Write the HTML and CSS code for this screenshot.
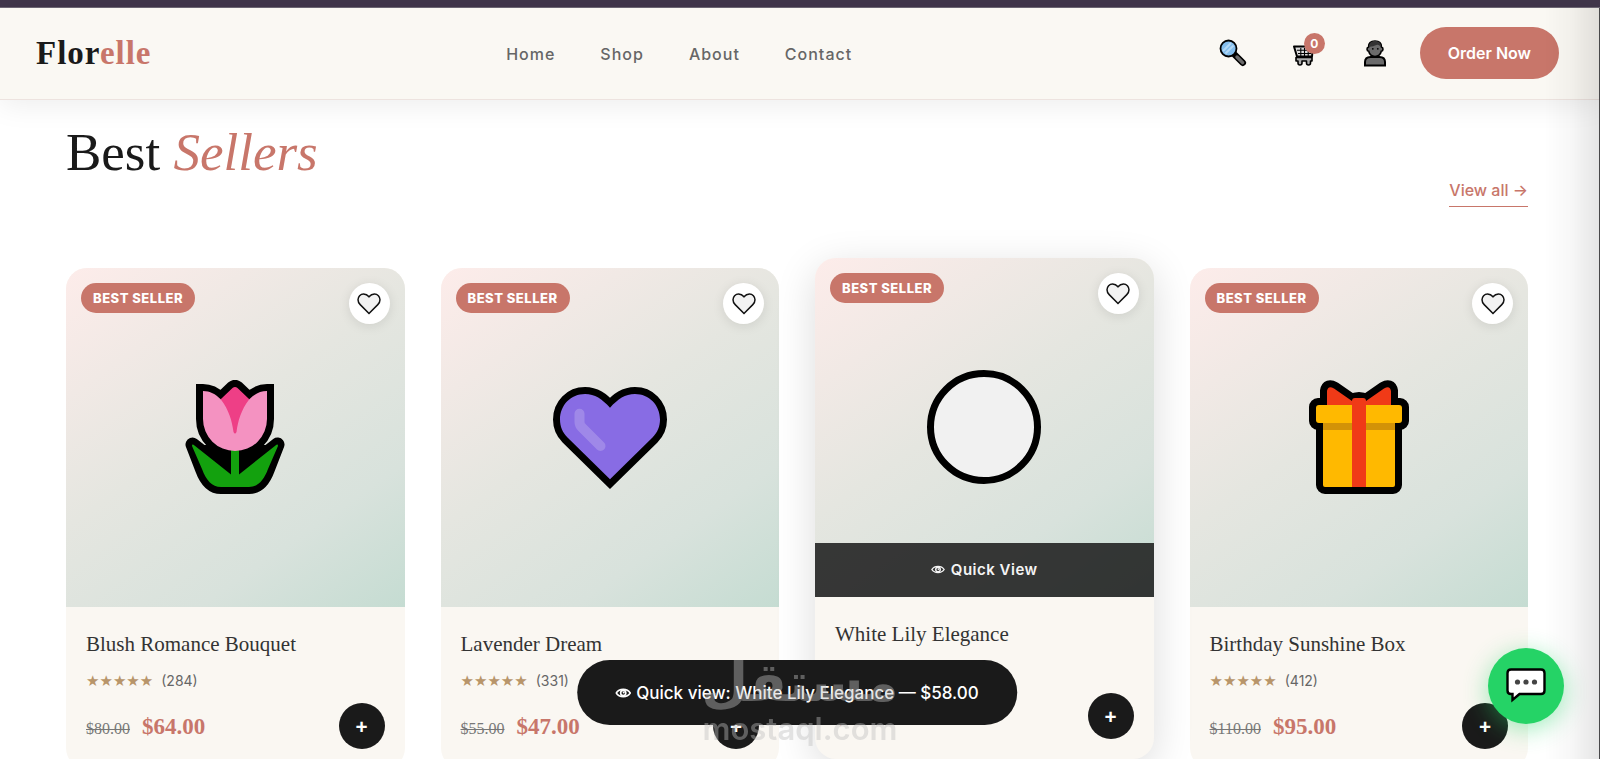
FILE: index.html
```
<!DOCTYPE html>
<html lang="en">
<head>
    <meta charset="UTF-8">
    <meta name="viewport" content="width=device-width, initial-scale=1.0">
    <title>Florelle</title>
    <link rel="stylesheet" href="styles.css">
</head>
<body>

<!-- shared icons -->
<svg class="sprite" aria-hidden="true">
    <symbol id="heart" viewBox="0 0 24 24">
        <path d="M12 21.500 L3.200 12.600 C1.600 11 1 9.500 1 7.800 C1 4.600 3.400 2 6.600 2 C9 2 10.500 3 12 4.800 C13.500 3 15 2 17.400 2 C20.600 2 23 4.600 23 7.800 C23 9.500 22.400 11 20.800 12.600 Z" fill="#f2f2f2" stroke="#111" stroke-width="1.500"/>
    </symbol>
    <symbol id="eye" viewBox="0 0 16 10">
        <path d="M1 5 C4 .2 12 .2 15 5 C12 9.800 4 9.800 1 5 Z" fill="none" stroke="currentColor" stroke-width="1.600"/>
        <circle cx="8" cy="5" r="2.600" fill="none" stroke="currentColor" stroke-width="1.600"/>
        <circle cx="8.500" cy="4.500" r="1" fill="currentColor"/>
    </symbol>
</svg>

<div class="topbar"></div>

<header class="header">
    <a class="logo" href="#">Flor<span>elle</span></a>
    <nav class="nav">
        <a href="#">Home</a>
        <a href="#">Shop</a>
        <a href="#">About</a>
        <a href="#">Contact</a>
    </nav>
    <div class="actions">
        <button class="icon-btn" type="button" aria-label="Search">
            <svg width="28" height="28" viewBox="0 0 28 28">
                <path d="M16 16 L23.800 23.800" stroke="#000" stroke-width="6.500" stroke-linecap="round"/>
                <path d="M18 18 L23.600 23.600" stroke="#6b6b6b" stroke-width="3.400" stroke-linecap="round"/>
                <circle cx="9.500" cy="9.500" r="8" fill="#83bdec" stroke="#000" stroke-width="1.800"/>
                <path d="M4 12 L12 4 M6.500 14.500 L14.500 6.500" stroke="#b3d8f5" stroke-width="2"/>
            </svg>
        </button>
        <button class="icon-btn cart" type="button" aria-label="Cart">
            <svg width="24" height="28" viewBox="0 0 24 28">
                <path d="M2 7.500 H21 L20 17.500 H5 Z" fill="#ddd" stroke="#000" stroke-width="2" stroke-linejoin="round"/>
                <path d="M5 11.200 H19.500 M6 14.500 H19 M8.800 9 V17 M12.500 9 V17 M16.200 9 V17" stroke="#000" stroke-width="1.100"/>
                <path d="M4 18.500 H20 V22 H18.500 V24 A2 2 0 0 1 14.500 24 V22 H10 V24 A2 2 0 0 1 6 24 V22 H4 Z" fill="#aaa" stroke="#000" stroke-width="1.600" stroke-linejoin="round"/>
            </svg>
            <span class="cart-count">0</span>
        </button>
        <button class="icon-btn" type="button" aria-label="Account">
            <svg width="24" height="28" viewBox="0 0 24 28">
                <path d="M2 26.500 V23 C2 19.500 4 18 7.500 18 H16.500 C20 18 22 19.500 22 23 V26.500 Z" fill="#6b6b6b" stroke="#000" stroke-width="2"/>
                <path d="M12 2 C16.500 2 18.500 4.500 18.500 8 C20.500 8.500 20.500 12 18.300 12.300 C17.500 15.500 15.500 17.500 12 17.500 C8.500 17.500 6.500 15.500 5.700 12.300 C3.500 12 3.500 8.500 5.500 8 C5.500 4.500 7.500 2 12 2 Z" fill="#6b6b6b" stroke="#000" stroke-width="1.600"/>
                <path d="M6 8.500 C6 4 8.500 2 12 2 C16 2 18 4 18 8.500 C16.500 5.500 14.500 5 12 6.500 C9.500 8 7 7 6 8.500 Z" fill="#333"/>
                <circle cx="9.800" cy="9.800" r=".9"/>
                <circle cx="14.800" cy="9.800" r=".9"/>
            </svg>
        </button>
        <button class="order-btn" type="button">Order Now</button>
    </div>
</header>

<main class="section">
    <div class="section-head">
        <h2>Best <em>Sellers</em></h2>
        <a class="view-all" href="#">View all →</a>
    </div>

    <div class="products">
        <article class="card">
            <div class="card-img">
                <span class="badge">BEST SELLER</span>
                <button class="wish" type="button" aria-label="Add to wishlist"><svg width="24" height="24"><use href="#heart"/></svg></button>
                <svg class="emoji" viewBox="0 0 114 114">
                    <path d="M14.500 64.500 L53 94.500 V71 H61 V94.500 L99.500 64.500 L90 89 C86 100 80 107 71 107 H43 C34 107 28 100 24 89 Z" fill="#000" stroke="#000" stroke-width="14" stroke-linejoin="round"/>
                    <path d="M25 65 H89 L61 95 H53 Z"/>
                    <path d="M25 11 C32 11 37.500 14 42.700 19.300 L54.500 8 Q57 6 59.500 8 L71.300 19.300 C76.500 14 82 11 89 11 V39 A32 32 0 0 1 25 39 Z" stroke="#000" stroke-width="14"/>
                    <path d="M14 66 Q14 63.500 16.500 65.500 L53 94.500 V70 H61 V94.500 L97.500 65.500 Q100 63.500 100 66 L90 89 C86 100 80 107 71 107 H43 C34 107 28 100 24 89 Z" fill="#13a10e"/>
                    <path d="M25 11 C32 11 37.500 14 42.700 19.300 L57 24 L71.300 19.300 C76.500 14 82 11 89 11 V39 A32 32 0 0 1 25 39 Z" fill="#f492c1"/>
                    <path d="M42.700 19.300 L54.500 8 Q57 6 59.500 8 L71.300 19.300 C63 30 60 41 58.500 52 Q57 55 55.500 52 C54 41 51 30 42.700 19.300 Z" fill="#ee3f86"/>
                </svg>
            </div>
            <div class="card-body">
                <h3>Blush Romance Bouquet</h3>
                <div class="rating"><span class="stars">★★★★★</span><span>(284)</span></div>
                <div class="card-foot">
                    <p class="price"><s>$80.00</s><strong>$64.00</strong></p>
                    <button class="add" type="button" aria-label="Add to cart">+</button>
                </div>
            </div>
        </article>

        <article class="card">
            <div class="card-img">
                <span class="badge">BEST SELLER</span>
                <button class="wish" type="button" aria-label="Add to wishlist"><svg width="24" height="24"><use href="#heart"/></svg></button>
                <svg class="emoji" viewBox="0 0 114 114">
                    <path d="M57 99.300 L14.500 57.500 C9.500 52.500 7 46.500 7 39.500 C7 25 18 14 32 14 C42 14 49 19 57 27.700 C65 19 72 14 82 14 C96 14 107 25 107 39.500 C107 46.500 104.500 52.500 99.500 57.500 Z" stroke="#000" stroke-width="14"/>
                    <path d="M57 99.300 L14.500 57.500 C9.500 52.500 7 46.500 7 39.500 C7 25 18 14 32 14 C42 14 49 19 57 27.700 C65 19 72 14 82 14 C96 14 107 25 107 39.500 C107 46.500 104.500 52.500 99.500 57.500 Z" fill="#886ce4"/>
                    <path d="M26.500 33.700 V42 Q26.500 45 29 47.500 L47.500 66" fill="none" stroke="#9f88e8" stroke-width="10" stroke-linecap="round"/>
                </svg>
            </div>
            <div class="card-body">
                <h3>Lavender Dream</h3>
                <div class="rating"><span class="stars">★★★★★</span><span>(331)</span></div>
                <div class="card-foot">
                    <p class="price"><s>$55.00</s><strong>$47.00</strong></p>
                    <button class="add" type="button" aria-label="Add to cart">+</button>
                </div>
            </div>
        </article>

        <article class="card active">
            <div class="card-img">
                <span class="badge">BEST SELLER</span>
                <button class="wish" type="button" aria-label="Add to wishlist"><svg width="24" height="24"><use href="#heart"/></svg></button>
                <svg class="emoji" viewBox="0 0 114 114">
                    <circle cx="57" cy="57" r="53.500" fill="#f1f1f1" stroke="#000" stroke-width="7"/>
                </svg>
                <button class="quick" type="button"><svg width="14" height="9"><use href="#eye"/></svg>Quick View</button>
            </div>
            <div class="card-body">
                <h3>White Lily Elegance</h3>
                <div class="rating"></div>
                <div class="card-foot">
                    <p class="price"><strong>$58.00</strong></p>
                    <button class="add" type="button" aria-label="Add to cart">+</button>
                </div>
            </div>
        </article>

        <article class="card">
            <div class="card-img">
                <span class="badge">BEST SELLER</span>
                <button class="wish" type="button" aria-label="Add to wishlist"><svg width="24" height="24"><use href="#heart"/></svg></button>
                <svg class="emoji" viewBox="0 0 114 114">
                    <g stroke="#000" stroke-width="14" stroke-linejoin="round">
                        <path d="M25 25 V11 Q26 5 32 8.500 L50 21 Q57 17 64 21 L82 8.500 Q88 5 89 11 V25 Z"/>
                        <rect x="14" y="25" width="86" height="18" rx="2"/>
                        <rect x="21" y="43" width="72" height="64" rx="2"/>
                    </g>
                    <path d="M25 25 V11 Q26 5 32 8.500 L50 21 V25 Z M89 25 V11 Q88 5 82 8.500 L64 21 V25 Z" fill="#f03a17"/>
                    <path d="M21 43 H93 V105 Q93 107 91 107 H23 Q21 107 21 105 Z" fill="#ffb900"/>
                    <path d="M21 43 H93 V50 H21 Z" fill="#d39207"/>
                    <rect x="14" y="25" width="86" height="18" rx="3" fill="#ffb900"/>
                    <path d="M50 107 V21 Q50 18 53 18 H61 Q64 18 64 21 V107 Z" fill="#f03a17"/>
                </svg>
            </div>
            <div class="card-body">
                <h3>Birthday Sunshine Box</h3>
                <div class="rating"><span class="stars">★★★★★</span><span>(412)</span></div>
                <div class="card-foot">
                    <p class="price"><s>$110.00</s><strong>$95.00</strong></p>
                    <button class="add" type="button" aria-label="Add to cart">+</button>
                </div>
            </div>
        </article>
    </div>
</main>

<div class="toast" role="status"><svg width="16" height="10"><use href="#eye"/></svg>Quick view: White Lily Elegance — $58.00</div>

<div class="watermark"><span lang="ar">مستقل</span><b>mostaql.com</b></div>

<button class="chat" type="button" aria-label="Chat">
    <svg width="40" height="36" viewBox="0 0 40 36">
        <path d="M5 1.500 H35 Q38.500 1.500 38.500 5 V22.500 Q38.500 26 35 26 H13.500 L6.500 32 V26 H5 Q1.500 26 1.500 22.500 V5 Q1.500 1.500 5 1.500 Z" fill="#fff" stroke="#000" stroke-width="2.400"/>
        <circle cx="11.500" cy="14" r="2.600" fill="#444"/>
        <circle cx="20" cy="14" r="2.600" fill="#444"/>
        <circle cx="28.500" cy="14" r="2.600" fill="#444"/>
    </svg>
</button>

<div class="edge"></div>

</body>
</html>
```
FILE: styles.css
```
* {
    box-sizing: border-box;
}

body {
    margin: 0;
    height: 100vh;
    overflow: hidden;
    background: #fff;
    color: #1a1a1a;
    font-family: Inter, "Open Sans", sans-serif;
}

button {
    border: none;
    padding: 0;
    font-family: inherit;
    cursor: pointer;
}

a {
    text-decoration: none;
}

.sprite {
    position: absolute;
    width: 0;
    height: 0;
}

.topbar {
    height: 8px;
    background: #41364b;
    border-bottom: 1px solid #6f6876;
}

/* header */
.header {
    position: relative;
    z-index: 10;
    display: flex;
    justify-content: space-between;
    align-items: center;
    padding: 19px 41px 20px 36px;
    background: #faf8f3;
    border-bottom: 1px solid #ede3df;
    box-shadow: 0 4px 30px rgba(0, 0, 0, 0.08);
}

.logo {
    font-family: "Liberation Serif", serif;
    font-size: 33px;
    line-height: 40px;
    font-weight: bold;
    letter-spacing: 1px;
    color: #1a1a1a;
}

.logo span {
    color: #c8766a;
}

.nav {
    display: flex;
    gap: 45px;
    padding-top: 2px;
}

.nav a {
    color: #666;
    font-size: 16px;
    font-weight: 500;
    letter-spacing: 1px;
}

.actions {
    display: flex;
    align-items: center;
    gap: 18px;
}

.icon-btn {
    position: relative;
    display: flex;
    justify-content: center;
    align-items: center;
    width: 53px;
    height: 48px;
    background: none;
}

.cart-count {
    position: absolute;
    top: 4px;
    right: 6px;
    width: 21px;
    height: 21px;
    border-radius: 50%;
    background: #c8766a;
    color: #fff;
    font-size: 12px;
    line-height: 21px;
    font-weight: 700;
}

.order-btn {
    height: 52px;
    padding: 0 28px;
    border-radius: 26px;
    background: #c8766a;
    color: #fff;
    font-size: 16px;
    font-weight: 600;
}

/* best sellers */
.section {
    padding: 15px 72px 0 66px;
}

.section-head {
    display: flex;
    justify-content: space-between;
    align-items: flex-end;
    margin-bottom: 61px;
}

.section-head h2 {
    margin: 0 0 17px;
    font-family: "Liberation Serif", serif;
    font-size: 53px;
    line-height: 75px;
    font-weight: normal;
}

.section-head em {
    color: #c8766a;
}

.view-all {
    padding-bottom: 5px;
    border-bottom: 1px solid #c8766a;
    color: #c8766a;
    font-size: 16px;
    line-height: 22px;
    font-weight: 500;
}

.products {
    display: grid;
    grid-template-columns: repeat(4, 1fr);
    gap: 36px;
}

.card {
    border-radius: 21px;
    overflow: hidden;
    background: #faf7f2;
}

.card.active {
    transform: translateY(-10px);
    box-shadow: 0 10px 42px rgba(0, 0, 0, 0.14);
}

.card-img {
    position: relative;
    display: flex;
    justify-content: center;
    align-items: center;
    aspect-ratio: 1;
    background: linear-gradient(145deg, #fdecea, #e5e6e0 45%, #d8e2dc 75%, #c5dcd2);
}

.emoji {
    width: 114px;
    height: 114px;
}

.badge {
    position: absolute;
    top: 15px;
    left: 15px;
    padding: 0 12px;
    border-radius: 15px;
    background: #c8766a;
    color: #fff;
    font-size: 13px;
    line-height: 30px;
    font-weight: 800;
    letter-spacing: 0.5px;
}

.wish {
    position: absolute;
    top: 15px;
    right: 15px;
    display: flex;
    justify-content: center;
    align-items: center;
    width: 41px;
    height: 41px;
    border-radius: 50%;
    background: #fff;
    box-shadow: 0 2px 12px rgba(0, 0, 0, 0.1);
}

.quick {
    position: absolute;
    left: 0;
    right: 0;
    bottom: 0;
    display: flex;
    justify-content: center;
    align-items: center;
    gap: 6px;
    height: 54px;
    background: rgba(26, 26, 26, 0.86);
    color: #f4f4f4;
    font-size: 15px;
    font-weight: 600;
    letter-spacing: 0.5px;
}

.card-body {
    padding: 22px 20px 20px;
}

.card-body h3 {
    margin: 0 0 12px;
    color: #333;
    font-family: "Liberation Serif", serif;
    font-size: 21px;
    line-height: 30px;
    font-weight: normal;
}

.rating {
    display: flex;
    align-items: center;
    gap: 8px;
    height: 20px;
    margin-bottom: 12px;
    color: #666;
    font-size: 14px;
    line-height: 20px;
}

.stars {
    color: #b8956a;
    font-family: "DejaVu Sans", sans-serif;
    font-size: 15px;
}

.card-foot {
    display: flex;
    justify-content: space-between;
    align-items: center;
}

.price {
    display: flex;
    align-items: baseline;
    gap: 12px;
    margin: 0;
    padding-top: 2px;
    font-family: "Liberation Serif", serif;
}

.price s {
    color: #777;
    font-size: 16px;
}

.price strong {
    color: #c8766a;
    font-size: 23px;
}

.add {
    width: 46px;
    height: 46px;
    border-radius: 50%;
    background: #1a1a1a;
    color: #fff;
    font-size: 21px;
    font-weight: 600;
}

/* floating parts */
.toast {
    position: fixed;
    left: 50%;
    bottom: 34px;
    z-index: 20;
    display: flex;
    align-items: center;
    gap: 5px;
    height: 65px;
    padding: 0 38px;
    border-radius: 33px;
    background: #1a1a1a;
    color: #fff;
    font-size: 17px;
    font-weight: 500;
    white-space: nowrap;
    margin-left: -3px;
    transform: translateX(-50%);
}

.watermark {
    position: fixed;
    left: 50%;
    bottom: 12px;
    z-index: 30;
    display: flex;
    flex-direction: column;
    align-items: center;
    color: rgb(190, 190, 190);
    opacity: 0.42;
    transform: translateX(-50%);
    pointer-events: none;
}

.watermark span {
    font-family: "DejaVu Sans", sans-serif;
    font-size: 54px;
    line-height: 56px;
    font-weight: bold;
}

.watermark b {
    font-size: 31px;
    line-height: 36px;
    font-weight: 600;
}

.chat {
    position: fixed;
    right: 36px;
    bottom: 35px;
    z-index: 20;
    display: flex;
    justify-content: center;
    align-items: center;
    width: 76px;
    height: 76px;
    border-radius: 50%;
    background: #25d366;
    box-shadow: 0 5px 24px rgba(37, 211, 102, 0.45);
}

.edge {
    position: fixed;
    top: 8px;
    right: 0;
    bottom: 0;
    z-index: 15;
    width: 56px;
    border-right: 1px solid #48484a;
    background: linear-gradient(to right, rgba(0, 0, 0, 0), rgba(0, 0, 0, 0.03) 50%, rgba(0, 0, 0, 0.1));
    pointer-events: none;
}
```
